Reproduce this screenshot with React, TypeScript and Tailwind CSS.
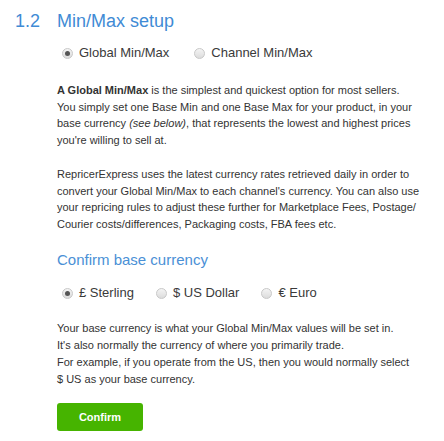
import { useState } from 'react'

type Option = { value: string; label: string }

const MINMAX: Option[] = [
  { value: 'global', label: 'Global Min/Max' },
  { value: 'channel', label: 'Channel Min/Max' },
]

const CURRENCIES: Option[] = [
  { value: 'gbp', label: '£ Sterling' },
  { value: 'usd', label: '$ US Dollar' },
  { value: 'eur', label: '€ Euro' },
]

function Radio({ checked, label, onClick, className = '' }: {
  checked: boolean
  label: string
  onClick: () => void
  className?: string
}) {
  return (
    <button type="button" onClick={onClick} className={`flex items-center ${className}`}>
      <span className="w-[11px] h-[11px] rounded-full border border-[#c8c8c8] bg-gradient-to-b from-[#f4f4f4] to-[#dcdcdc] flex items-center justify-center flex-shrink-0">
        {checked && <span className="w-[5px] h-[5px] rounded-full bg-[#555]" />}
      </span>
      <span className="ml-[6px] text-[13px] text-[#3a3a3a]">{label}</span>
    </button>
  )
}

export default function App() {
  const [mode, setMode] = useState('global')
  const [currency, setCurrency] = useState('gbp')

  return (
    <div className="w-[444px] h-[441px] bg-white font-['Liberation_Sans',Arial,sans-serif] text-[#333] overflow-hidden">
      {/* Section heading */}
      <div className="flex items-baseline pt-[9px] pl-[15px] text-[18px] leading-[24px] text-[#3f8bd5]">
        <span className="w-[42px]">1.2</span>
        <span>Min/Max setup</span>
      </div>

      <div className="pl-[57px] pr-2">
        {/* Min/Max type */}
        <div className="flex items-center mt-[11px] ml-[5px] h-[18px]">
          {MINMAX.map((o, i) => (
            <Radio
              key={o.value}
              checked={mode === o.value}
              label={o.label}
              onClick={() => setMode(o.value)}
              className={i > 0 ? 'ml-[25px]' : ''}
            />
          ))}
        </div>

        <p className="mt-[20px] text-[11px] leading-[16.5px] whitespace-nowrap">
          <b>A Global Min/Max</b> is the simplest and quickest option for most sellers.
          <br />
          You simply set one Base Min and one Base Max for your product, in your
          <br />
          base currency <i>(see below)</i>, that represents the lowest and highest prices
          <br />
          you're willing to sell at.
        </p>

        <p className="mt-[18px] text-[11px] leading-[16.5px] whitespace-nowrap">
          RepricerExpress uses the latest currency rates retrieved daily in order to
          <br />
          convert your Global Min/Max to each channel's currency. You can also use
          <br />
          your repricing rules to adjust these further for Marketplace Fees, Postage/
          <br />
          Courier costs/differences, Packaging costs, FBA fees etc.
        </p>

        {/* Base currency */}
        <h3 className="mt-[18px] text-[15px] leading-[20px] text-[#4a90d6]">Confirm base currency</h3>

        <div className="flex items-center mt-[14px] ml-[5px] h-[18px]">
          {CURRENCIES.map((o, i) => (
            <Radio
              key={o.value}
              checked={currency === o.value}
              label={o.label}
              onClick={() => setCurrency(o.value)}
              className={i > 0 ? 'ml-[22px]' : ''}
            />
          ))}
        </div>

        <p className="mt-[18px] text-[11px] leading-[17px] whitespace-nowrap">
          Your base currency is what your Global Min/Max values will be set in.
          <br />
          It's also normally the currency of where you primarily trade.
          <br />
          For example, if you operate from the US, then you would normally select
          <br />
          $ US as your base currency.
        </p>

        <button
          type="button"
          className="mt-[15px] w-[86px] h-[28px] rounded-[3px] bg-[#46b400] text-white text-[11px] font-bold"
        >
          Confirm
        </button>
      </div>
    </div>
  )
}
